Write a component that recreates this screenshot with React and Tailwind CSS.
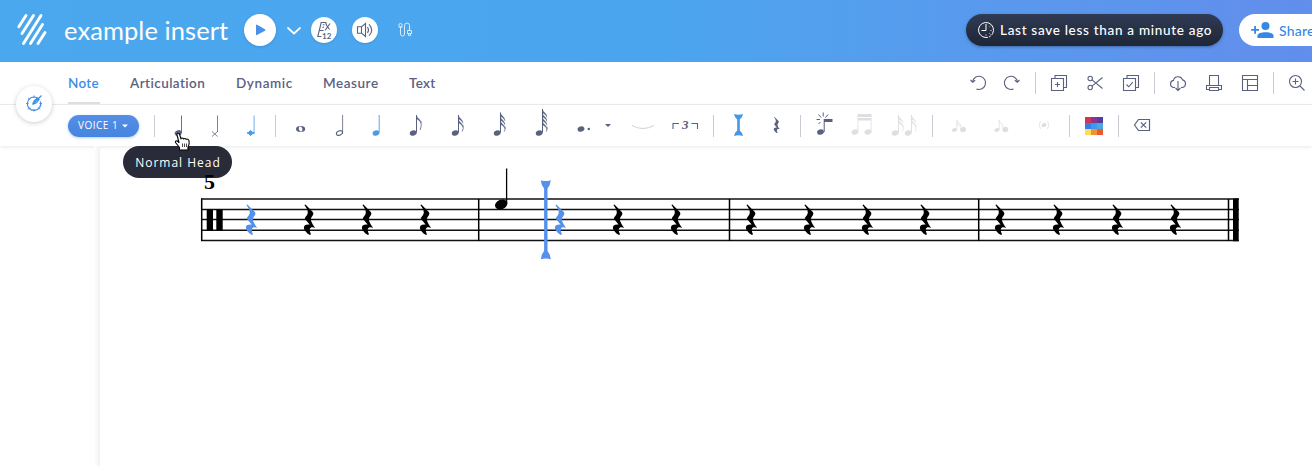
import React from "react";

const INK = "#59617f";
const BLUE = "#4a9bea";
const REST =
  "M-4.6 -14.8 L-3.6 -15.3 L3.8 -7.6 C5 -6 4.2 -4.6 2.8 -3 C.8 -.5 2.200 2.6 6.2 8.2 C1.6 6.6 -1 8.6 2 14.6 L1 15.4 C-6.8 10.6 -7.4 4 .6 4.800 L-4 -.6 C-4.8 -2.4 -1.2 -4 -1.2 -7.4 C-1.2 -10 -2.6 -12 -4.6 -14.8Z";

/* Toolbar drawing: the origin is the middle of the button. */
function Tool({ className = "", color = INK, children }) {
  return (
    <svg
      className={"h-[41px] w-6 shrink-0 overflow-visible " + className}
      viewBox="-12 -20 24 41"
      fill={color}
      stroke={color}
      strokeWidth="0"
    >
      {children}
    </svg>
  );
}

function Sep({ className = "" }) {
  return <div className={"h-[22px] w-px shrink-0 bg-[#c9cad3] " + className} />;
}

function Head({ x = -2, y = 7.5, rx = 3.5, ry = 2.6, hollow }) {
  return (
    <ellipse
      cx={x}
      cy={y}
      rx={rx}
      ry={ry}
      transform={`rotate(-22 ${x} ${y})`}
      {...(hollow ? { fill: "none", strokeWidth: 1.1 } : {})}
    />
  );
}

function Flagged({ flags, top = -10 }) {
  return (
    <g>
      <Head x={-2.8} y={8} />
      <path d={`M.5 7.500V${top}`} fill="none" strokeWidth="1" />
      {Array.from({ length: flags }, (_, i) => (
        <path
          key={i}
          d={`M.4 ${top + i * 4} C1 ${top + 3.5 + i * 4} 5.2 ${top + 4 + i * 4} 5 ${top + 8.5 + i * 4} C3.6 ${top + 5.5 + i * 4} 1.8 ${top + 5 + i * 4} .4 ${top + 3.6 + i * 4}Z`}
          strokeWidth=".2"
        />
      ))}
      <path d={`M5 ${top + 6 + (flags - 1) * 4}Q5.800 ${top + 11 + (flags - 1) * 3} 4.2 ${flags > 1 ? 6.500 : 5}`} fill="none" strokeWidth=".8" />
    </g>
  );
}

function Line({ className = "", children }) {
  return (
    <svg
      className={"size-6 shrink-0 overflow-visible " + className}
      viewBox="-12 -12 24 24"
      fill="none"
      stroke={INK}
      strokeWidth="1.1"
    >
      {children}
    </svg>
  );
}

function Header() {
  return (
    <header className="flex h-[62px] shrink-0 items-center overflow-hidden bg-linear-to-r from-[#4aa8ee] via-[#4ba5ee] to-[#628eec] pb-0.5">
      <svg className="ml-4 h-9 w-8 shrink-0" viewBox="16 12 32 36" fill="none" stroke="#fff" strokeWidth="2.9" strokeLinecap="round">
        <path d="M26 15.500L18.800 26.800M33.500 15.500L22 33.500M41 15.500L23.500 43.500M42.500 24.500L30.500 43.500M45 32.500L38 43.500" />
      </svg>
      <h1 className="ml-4 w-[165px] shrink-0 whitespace-nowrap pb-px font-['Lato',sans-serif] text-[25.500px] leading-8 tracking-[0.08px] text-white">example insert</h1>
      <div className="ml-[15px] flex size-8 shrink-0 items-center justify-center rounded-full bg-white shadow-[0_1px_3px_#2563a055]">
        <svg className="size-8" viewBox="0 0 32 32"><path d="M12 11.300q0-1 1-.6l8 4.500q1 .8 0 1.600l-8 4.300q-1 .5-1-.6z" fill="#4a90ea" /></svg>
      </div>
      <svg className="ml-3 h-4 w-4 shrink-0 overflow-visible" viewBox="0 0 16 16" fill="none" stroke="#fff" strokeWidth="1.700" strokeLinecap="round" strokeLinejoin="round">
        <path d="M0 6L6 11.500L12 6" />
      </svg>
      <div className="ml-[7px] size-[26px] shrink-0 rounded-full bg-white shadow-[0_1px_2px_#2563a044]">
        <svg className="size-[26px]" viewBox="0 0 26 26" fill="none" stroke={INK} strokeWidth="1.100">
          <path d="M12.500 13.500H8.200M15.500 8L14.800 5.500H10.200L6.800 19.500H10.500M13.500 7.800H11.800M13 10.200H11.300M19 6.500L14 13.500M15 7.500L18.500 12.500" />
          <text x="11" y="21.500" fontFamily="Lato" fontSize="8" fontWeight="700" fill={INK} stroke="none">12</text>
        </svg>
      </div>
      <div className="ml-[15px] size-[26px] shrink-0 rounded-full bg-white shadow-[0_1px_2px_#2563a044]">
        <svg className="size-[26px]" viewBox="0 0 26 26" fill="none" stroke={INK} strokeWidth="1.100">
          <path d="M5.500 9.800H9.500V16.200H5.500ZM9.500 9.800L13.500 6.500V19.500L9.500 16.200M15.500 10Q17.500 13 15.500 16M17 7.300Q22.500 13 17 18.700" />
        </svg>
      </div>
      <svg className="ml-[19px] size-4 shrink-0" viewBox="0 0 16 16" fill="none" stroke="#d8edfc" strokeWidth="1">
        <path d="M3.500 5V12Q3.500 14 5.500 14T7.500 12V3.500Q7.500 1 10 1T12.500 3.500V8M10.500 8.500H14.500V11.500H10.500ZM11.500 11.500V13.500H13.500V11.500" />
        <circle cx="3.500" cy="3.200" r="1.700" /><path d="M1.500 5H5.500" />
      </svg>
      <div className="ml-[553px] flex h-8 w-[257px] shrink-0 items-center rounded-full bg-linear-to-b from-[#303b54] to-[#1e2637] pl-3 shadow-[0_1px_3px_#1e263766]">
        <svg className="size-4 shrink-0" viewBox="0 0 16 16" fill="none" stroke="#fff" strokeWidth="1">
          <path d="M8 15.500A7.500 7.500 0 1 1 14.600 11.600" /><path d="M8 2V8.500H3.500" />
          <path d="M14.600 11.600A7.500 7.500 0 0 1 8 15.500M12.500 8.500H13.500M11.500 11.500L12.300 12.300M8 12.500V13.500M11.600 4.800L12.300 4.200" strokeDasharray="2 1" />
        </svg>
        <span className="ml-1.5 whitespace-nowrap font-['Lato',sans-serif] text-[13.500px] font-medium tracking-[0.7px] text-white">Last save less than a minute ago</span>
      </div>
      <div className="ml-4 flex h-8 w-28 shrink-0 items-center rounded-full bg-white pl-3 text-[#3588e4]">
        <svg className="h-4 w-[23px] shrink-0" viewBox="0 0 23 16" fill="currentColor">
          <path d="M3.200 4h1.800v3h3v1.800h-3v3H3.200v-3h-3V7h3z" /><circle cx="14.500" cy="4" r="4" /><path d="M6.500 16v-2.500C6.500 9 22.500 9 22.500 13.500V16z" />
        </svg>
        <span className="ml-[5px] pt-px font-['Lato',sans-serif] text-sm font-medium tracking-[0.2px]">Share</span>
      </div>
    </header>
  );
}

function Tabs() {
  return (
    <nav className="flex h-[43px] shrink-0 items-center border-b border-[#eeeeef] bg-white font-['Lato',sans-serif] text-[13.500px] font-semibold text-[#59617f]">
      <div className="ml-[68px] h-[42px] w-8 shrink-0 border-b-2 border-[#dedfe3] pt-[11px] tracking-[0.3px] text-[#3c8de4]">Note</div>
      <span className="ml-[30px] w-[77px] shrink-0 tracking-[0.43px]">Articulation</span>
      <span className="ml-[29px] w-[58px] shrink-0 tracking-[0.6px]">Dynamic</span>
      <span className="ml-[29px] w-[57px] shrink-0 tracking-[0.55px]">Measure</span>
      <span className="ml-[29px] w-7 shrink-0 tracking-[0.3px]">Text</span>
      <Line className="ml-[529px]"><path d="M-5.500 -1.500A6.600 6.600 0 1 1 -1.500 6M-7.500 -3L-5.300 -.8L-2.800 -2.800" /></Line>
      <Line className="ml-2.5"><path d="M5.500 -1.500A6.600 6.600 0 1 0 1.500 6M7.500 -3L5.300 -.8L2.800 -2.800" /></Line>
      <Sep className="ml-[11px]" />
      <Line className="ml-[11px]"><path d="M-7.500 -4.500H4.500V7.500H-7.500ZM-4 -4.500V-7.500H7.500V4.500H4.500M-1.500 -1V4M-4 1.500H1" /></Line>
      <Line className="ml-3"><circle cx="-4.800" cy="-4.500" r="2.200" /><circle cx="-4.800" cy="4.500" r="2.200" /><path d="M-3 -3.200L7.500 5.500M-3 3.200L7.500 -5.500" /></Line>
      <Line className="ml-3"><path d="M-7.500 -4.500H4.500V7.500H-7.500ZM-4 -4.500V-7.500H7.500V4.500H4.500M-4.500 1.500L-2.300 3.800L1.800 -.8" /></Line>
      <Sep className="ml-[11px]" />
      <Line className="ml-[11px]"><path d="M-3 4.500H-4.500A3.600 3.600 0 0 1 -4.500 -2.600A4.700 4.700 0 0 1 4.500 -3.100A3.900 3.900 0 0 1 4.500 4.500H3M0 -2V7.500M-2.500 5L0 7.500L2.500 5" /></Line>
      <Line className="ml-3"><path d="M-4.500 2.500V-7.500H4.500V2.500M-4.500 6.500H-7.500V2.500H7.500V6.500H4.500M-4.500 4.500H4.500V7.500H-4.500Z" /></Line>
      <Line className="ml-3"><path d="M-7.500 -7.500H7.500V7.500H-7.500ZM-7.500 -3.500H7.500M-2.500 -3.500V7.500M-2.500 2.500H7.500" /></Line>
      <Sep className="ml-[11px]" />
      <Line className="ml-[11px]"><circle cx="-1.500" cy="-1.500" r="6" /><path d="M3 3L7.500 7.500M-1.500 -4.500V1.500M-4.500 -1.500H1.500" /></Line>
    </nav>
  );
}

const SWATCHES = ["#ce3557", "#86368e", "#553da0", "#347fe4", "#3d98f1", "#4ba8d9", "#fbdc54", "#f39132", "#ec5a35"];

function Toolbar() {
  const pale = "#dedfe2";
  return (
    <div className="relative z-10 flex h-[41px] shrink-0 items-center bg-white shadow-[0_1px_4px_#00000018]">
      <button className="ml-[68px] flex h-[22px] w-[71px] shrink-0 items-center rounded-full bg-linear-to-b from-[#558ee5] to-[#4684df] pl-[10px] font-['Open_Sans',sans-serif] text-[10px] font-medium tracking-[0.5px] text-white shadow-[0_1px_3px_#2b66b555]">
        VOICE 1
        <svg className="ml-1 h-1 w-[6px]" viewBox="0 0 6 4"><path d="M0 .5H6L3 3.500Z" fill="#fff" /></svg>
      </button>
      <Sep className="ml-[15px]" />
      <Tool className="ml-3"><Head x={-.8} y={8} rx={3.600} ry={2.800} /><path d="M2.500 8V-9.500" strokeWidth=".9" /></Tool>
      <Tool className="ml-3"><path d="M-3 6.500L2.500 11.500M-3 11.500L2.500 6.500M2.500 7V-9.500" fill="none" strokeWidth=".8" /></Tool>
      <Tool className="ml-3" color={BLUE}><path d="M-4 8Q-1.500 7.500 -.5 5.300Q.8 7.500 3.500 8Q.8 8.500 -.5 10.700Q-1.500 8.500 -4 8Z" strokeWidth="1" /><path d="M3.100 8V-9.500" strokeWidth=".8" /></Tool>
      <Sep className="ml-3" />
      <Tool className="ml-3"><path fillRule="evenodd" d="M-4 4A4.600 3 0 1 1 5.200 4A4.600 3 0 1 1 -4 4ZM-1.200 3A1.700 2.400 -20 1 0 2.400 5A1.700 2.400 -20 1 0 -1.200 3Z" /></Tool>
      <Tool className="ml-[15px]"><Head x={.5} y={8} rx={3.200} ry={2.100} hollow /><path d="M3.600 7V-10" strokeWidth=".8" /></Tool>
      <Tool className="ml-3.5" color={BLUE}><Head x={-1} y={8} /><path d="M2.200 7.500V-10" strokeWidth=".9" /></Tool>
      <Tool className="ml-[15px]"><Flagged flags={1} /></Tool>
      <Tool className="ml-[18px]"><Flagged flags={2} /></Tool>
      <Tool className="ml-[18px]"><Flagged flags={3} top={-12.500} /></Tool>
      <Tool className="ml-[18px]"><Flagged flags={4} top={-16} /></Tool>
      <Tool className="ml-[18px]"><Head x={-3} y={4} /><circle cx="4.800" cy="4" r="1.200" /></Tool>
      <Tool><path d="M-3 -1H3L0 2Z" /></Tool>
      <Tool className="ml-[11px]" color="#d0d1d6"><path d="M-11 .5Q0 6.500 11 .5" fill="none" strokeWidth="1" /></Tool>
      <Tool className="ml-[18px]">
        <path d="M-12 4V-1.500H-6M6.500 -1.500H12.500V4" fill="none" strokeWidth="1.100" />
        <text x=".3" y="4" textAnchor="middle" fontFamily="Liberation Serif" fontStyle="italic" fontWeight="700" fontSize="13">3</text>
      </Tool>
      <Sep className="ml-4" />
      <Tool className="ml-3" color="#4598e7"><path d="M-4 -11Q.5 -9.500 5 -11L4 -8L1.800 -5.500V5.500L4 8L5 11Q.5 9.500 -4 11L-3 8L-.8 5.500V-5.500L-3 -8Z" /></Tool>
      <Tool className="ml-3.5"><path d={REST} transform="translate(.5) scale(.53)" /></Tool>
      <Sep className="ml-3" />
      <Tool className="ml-[11px]"><Head x={-3.500} y={7} /><path d="M-.3 7V-6H8.500V-3H.7V7Z" /><path d="M-.8 -8.500V-12.500M-3 -7.500L-5.500 -10.500M1.500 -7.500L4 -10.500M-4 -5.500H-7.500M-3.500 -3L-5.500 -1" strokeWidth="1" /></Tool>
      <Tool className="ml-3.5" color={pale}><Head x={-7} y={7} /><Head x={6} y={7} /><path d="M-4.500 7V-11H9.500V7H8.700V-4.500H-3.700V7Z" /><path d="M-4 -7.500H9" stroke="#fff" strokeWidth="1" /></Tool>
      <Tool className="ml-[18px]" color={pale}><g transform="translate(-6)"><Flagged flags={2} /></g><g transform="translate(7)"><Flagged flags={2} /></g></Tool>
      <Sep className="ml-4" />
      <Tool className="ml-3.5" color={pale}><Head x={-4.500} y={5} rx={2.500} ry={1.800} /><Head x={4} y={4.500} rx={3} /><path d="M-2.200 5V-5Q-2 -2 1.500 -.5V2Q0 -.5 -2.200 -1.500" fill="none" strokeWidth=".8" /></Tool>
      <Tool className="ml-[18px]" color={pale}><Head x={-4} y={5} rx={2.500} ry={1.800} /><Head x={4.300} y={4.500} rx={3} /><path d="M-1.800 5V-5Q-1.500 -2 1.800 0V3" fill="none" strokeWidth=".8" /></Tool>
      <Tool className="ml-[19px]" color={pale}><Head x={0} y={0} rx={2.600} ry={2} /><path d="M-3.500 -4Q-6 0 -3.500 4M3.500 -4Q6 0 3.500 4" fill="none" strokeWidth=".8" /></Tool>
      <Sep className="ml-[13px]" />
      <div className="ml-[15px] grid size-[18px] shrink-0 grid-cols-[6px_6px_6px] grid-rows-[6px_6px_6px]">
        {SWATCHES.map((c) => <div key={c} style={{ background: c }} />)}
      </div>
      <Sep className="ml-[15px]" />
      <Tool className="ml-[11px]"><path d="M-3.500 -5.500H7.500V5.500H-3.500L-7.500 0ZM-1.200 -2.700L4.200 2.700M4.200 -2.700L-1.200 2.700" fill="none" strokeWidth="1.200" /></Tool>
    </div>
  );
}

const RESTS = [251, 309, 367, 425, 560, 618, 676, 751, 809, 867, 925, 1000, 1058, 1117, 1175];

function Score() {
  return (
    <main className="relative z-30 flex h-[320px] shrink-0">
      <div className="w-[94px] shrink-0" />
      <div className="w-1.5 shrink-0 bg-linear-to-r from-white to-[#f1f1f2]" />
      <svg className="h-[320px] w-[1212px] shrink-0" viewBox="100 146 1212 320" fill="#000">
        <path d="M201 199H1239M201 209.500H1239M201 219.500H1239M201 230.200H1239M201 240.500H1239" stroke="#111" strokeWidth="1.400" />
        <path d="M201.700 198.500V241M478.700 199V241M729.500 199V241M978.700 199V241M1228.500 199V241" stroke="#000" strokeWidth="1.500" />
        <path d="M1233 198.500H1238.700V241.200H1233ZM206.700 209.500H213V230.500H206.700ZM216.300 209.500H222.700V230.500H216.300Z" />
        <text x="204" y="189" fontFamily="Liberation Serif" fontWeight="700" fontSize="22">5</text>
        {RESTS.map((x) => (
          <path key={x} d={REST} transform={`translate(${x} 219.700)`} fill={x === 251 || x === 560 ? "#5590ed" : "#000"} />
        ))}
        <ellipse cx="501.200" cy="204.500" rx="6.400" ry="4.700" transform="rotate(-20 501.200 204.500)" />
        <path d="M506.600 168.500V203.500" stroke="#000" strokeWidth="1.300" />
        <path d="M540.800 180.200Q545.800 182 550.800 180.200L549.700 185L547.500 188.500V251L549.700 254.500L550.800 259.300Q545.800 257.500 540.800 259.300L541.900 254.500L544.100 251V188.500L541.900 185Z" fill="#5590ed" />
      </svg>
    </main>
  );
}

export default function App() {
  return (
    <div className="relative flex h-[466px] w-[1312px] flex-col overflow-hidden bg-white">
      <Header />
      <Tabs />
      <Toolbar />
      <Score />
      <button className="absolute left-4 top-[86px] z-20 size-9 rounded-full bg-white shadow-[0_1px_5px_#00000033]">
        <svg className="size-9" viewBox="0 0 36 36" fill="none" stroke="#418fe5" strokeWidth="1.200">
          <path d="M20.800 11.600A6.700 6.700 0 1 0 24.400 15.500M16.500 18.500L25.500 9.500M16.500 18.500L18.200 14.800L22 11.500M16.500 18.500L20.500 16.800L23.500 13" />
          <path d="M18 9.500V12M10.200 17.500H12.500M23.500 17.500H26M18 23V25.500M12.200 12L14 13.800M22 21.500L24 23.500M14 21.500L12 23.500" strokeWidth="1" />
        </svg>
      </button>
      <div className="absolute left-[123px] top-[146px] z-20 flex h-8 w-[109px] items-center justify-center rounded-full bg-[#2a2b38] pl-px pt-0.5 font-['Open_Sans',sans-serif] text-xs font-medium tracking-[1px] text-white">
        Normal Head
      </div>
      <svg className="absolute left-[174px] top-[132px] z-40 h-[19px] w-[17px]" viewBox="0 0 17 19" fill="#fff" stroke="#000" strokeWidth="1.100" strokeLinejoin="round">
        <path d="M5.500 18V15.500L1.500 10.500Q1 8.500 3.200 9L5 10.500L3 3Q2.800 1 4.300 1.200Q5.300 1.300 5.800 3L7 7Q7.200 5.500 9 6.200L9.500 7Q11 5.900 12 7.300Q14.500 6.600 15 9Q15.800 12 14 15V18Z" />
        <path d="M8.500 11.500V15M10.500 11.500V15M12.500 11.500V15" strokeWidth=".7" />
      </svg>
    </div>
  );
}
